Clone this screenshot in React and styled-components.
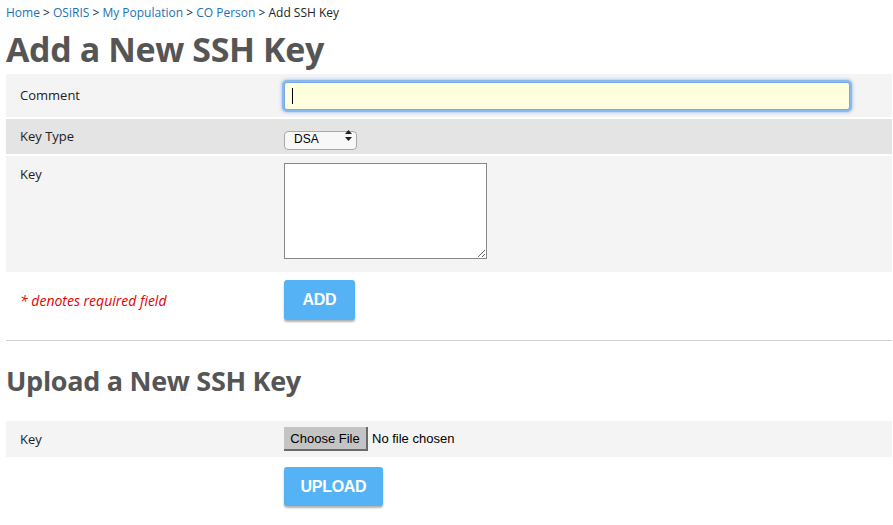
import React from "react";
import styled, { createGlobalStyle } from "styled-components";

const GlobalStyle = createGlobalStyle`
  html, body {
    margin: 0;
    padding: 0;
    background: #fff;
  }
  body {
    font-family: "Open Sans", "Noto Sans", sans-serif;
    color: #222;
  }
`;

const Page = styled.div`
  padding: 0 1px 0 6px;
`;

const Breadcrumbs = styled.div`
  padding-top: 4px;
  font-size: 12px;
  line-height: 18px;
  color: #222;
  a {
    color: #2271b3;
    text-decoration: none;
  }
`;

const Title = styled.h1`
  margin: 7px 0 5px;
  font-size: 34px;
  line-height: 40px;
  font-weight: 700;
  color: #555;
  letter-spacing: -0.4px;
`;

const SubTitle = styled.h2`
  margin: 23px 0 23px;
  font-size: 27px;
  line-height: 34px;
  font-weight: 700;
  color: #555;
  letter-spacing: -0.3px;
`;

const Form = styled.div`
  display: flex;
  flex-direction: column;
  gap: 2px;
`;

const Row = styled.div`
  display: grid;
  grid-template-columns: 278px 1fr;
  align-items: ${({ $top }) => ($top ? "start" : "center")};
  min-height: ${({ $h }) => $h}px;
  padding: ${({ $pad }) => $pad || "0"};
  box-sizing: border-box;
  background: ${({ $bg }) => $bg || "transparent"};
`;

const Label = styled.div`
  padding-left: 14px;
  font-size: 13px;
  line-height: 18px;
  color: #222;
  padding-top: ${({ $top }) => $top || 0}px;
  margin-top: -1px;
`;

const Required = styled.div`
  padding-left: 14px;
  font-size: 14px;
  font-style: italic;
  color: #e10000;
`;

const TextInput = styled.input`
  width: 566px;
  height: 28px;
  box-sizing: border-box;
  border: 1px solid #7aa9df;
  border-radius: 3px;
  background: #ffffdd;
  box-shadow: 0 0 0 2px #8ab8f0, 0 0 3px 3px rgba(120, 170, 240, 0.5);
  outline: none;
  padding: 0 6px;
  font-size: 13px;
  caret-color: #000;
`;

const Caret = styled.span`
  position: absolute;
  left: 8px;
  top: 6px;
  width: 1px;
  height: 16px;
  background: #000;
`;

const InputWrap = styled.div`
  position: relative;
  width: 566px;
`;

const SelectWrap = styled.div`
  position: relative;
  width: 73px;
  height: 19px;
  margin-top: -2px;
`;

const Select = styled.select`
  appearance: none;
  width: 73px;
  height: 19px;
  box-sizing: border-box;
  border: 1px solid #a8a8a8;
  border-radius: 4px;
  background: #f8f8f8;
  padding: 0 0 1px 9px;
  font-family: "Liberation Sans", Arial, sans-serif;
  font-size: 12px;
  line-height: 15px;
  color: #000;
  outline: none;
`;

const Arrows = styled.svg`
  position: absolute;
  right: 5px;
  top: 4px;
  pointer-events: none;
`;

const TextArea = styled.textarea`
  width: 203px;
  height: 96px;
  box-sizing: border-box;
  margin-top: 7px;
  border: 1px solid #888;
  background: #fff;
  resize: both;
  outline: none;
`;

const Button = styled.button`
  width: ${({ $w }) => $w}px;
  height: ${({ $h }) => $h}px;
  border: none;
  border-radius: 3px;
  background: #55b2f4;
  color: #fff;
  font-family: "Liberation Sans", Arial, sans-serif;
  font-weight: 700;
  font-size: 16px;
  letter-spacing: -0.3px;
  box-shadow: 0 2px 2px rgba(0, 0, 0, 0.3);
  cursor: pointer;
`;

const Divider = styled.hr`
  margin: 9px 0 0;
  border: none;
  border-top: 1px solid #d0d0d0;
`;

const FileInput = styled.input`
  display: block;
  font-family: "Liberation Sans", Arial, sans-serif;
  font-size: 13px;
  color: #000;
  &::file-selector-button {
    font-family: "Liberation Sans", Arial, sans-serif;
    font-size: 13px;
    color: #000;
    height: 24px;
    width: 84px;
    padding: 0;
    margin-right: 4px;
    background: #c4c4c4;
    border: 1px solid #c4c4c4;
    border-right-color: #6a6a6a;
    border-bottom-color: #6a6a6a;
    border-width: 0 2px 2px 0;
  }
`;

const ArrowIcon = () => (
  <Arrows width="7" height="11" viewBox="0 0 7 11">
    <path d="M3.5 0 L7 4 L0 4 Z" fill="#222" />
    <path d="M0 7 L7 7 L3.5 11 Z" fill="#222" />
  </Arrows>
);

const App = () => {
  return (
    <Page>
      <GlobalStyle />
      <Breadcrumbs>
        <a href="/#">Home</a> &gt; <a href="/#">OSiRIS</a> &gt;{" "}
        <a href="/#">My Population</a> &gt; <a href="/#">CO Person</a> &gt; Add
        SSH Key
      </Breadcrumbs>
      <Title>Add a New SSH Key</Title>
      <Form>
        <Row $h={43} $bg="#f4f4f4">
          <Label>Comment</Label>
          <InputWrap>
            <TextInput type="text" />
            <Caret />
          </InputWrap>
        </Row>
        <Row $h={35} $bg="#e4e4e4">
          <Label>Key Type</Label>
          <SelectWrap>
            <Select defaultValue="DSA">
              <option>DSA</option>
              <option>RSA</option>
            </Select>
            <ArrowIcon />
          </SelectWrap>
        </Row>
        <Row $h={116} $bg="#f4f4f4" $top>
          <Label $top={10}>Key</Label>
          <TextArea />
        </Row>
        <Row $h={57} $pad="5px 0 10px">
          <Required>* denotes required field</Required>
          <div>
            <Button $w={71} $h={40}>ADD</Button>
          </div>
        </Row>
      </Form>
      <Divider />
      <SubTitle>Upload a New SSH Key</SubTitle>
      <Form>
        <Row $h={36} $bg="#f4f4f4">
          <Label>Key</Label>
          <div>
            <FileInput type="file" />
          </div>
        </Row>
        <Row $h={57} $pad="6px 0 8px">
          <div />
          <div>
            <Button $w={99} $h={39}>UPLOAD</Button>
          </div>
        </Row>
      </Form>
    </Page>
  );
};

export default App;
